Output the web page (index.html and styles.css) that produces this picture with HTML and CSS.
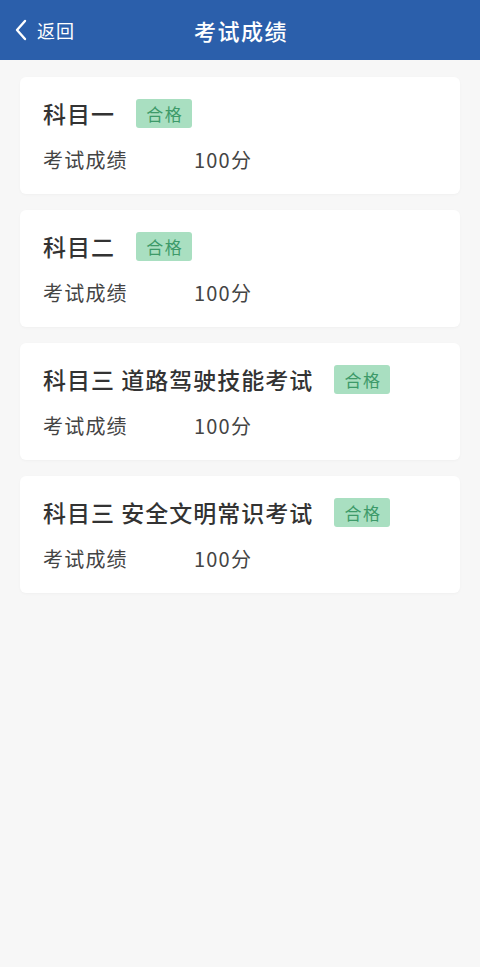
FILE: index.html
```html
<!DOCTYPE html>
<html lang="zh-CN">
<head>
    <meta charset="UTF-8">
    <meta name="viewport" content="width=device-width, initial-scale=1.0">
    <title>考试成绩</title>
    <link rel="stylesheet" href="styles.css">
</head>
<body>
    <header class="topbar">
        <a class="back" href="#">
            <svg class="back-icon" width="14" height="22" viewBox="0 0 14 22">
                <path d="M11 2 L3 11 L11 20" fill="none" stroke="#fff" stroke-width="2.4" stroke-linecap="round" stroke-linejoin="round"/>
            </svg>
            <span>返回</span>
        </a>
        <h1 class="title">考试成绩</h1>
    </header>

    <main class="list">
        <div class="card">
            <div class="card-head">
                <span class="subject">科目一</span>
                <span class="badge">合格</span>
            </div>
            <div class="score-row">
                <span class="label">考试成绩</span>
                <span class="value">100分</span>
            </div>
        </div>

        <div class="card">
            <div class="card-head">
                <span class="subject">科目二</span>
                <span class="badge">合格</span>
            </div>
            <div class="score-row">
                <span class="label">考试成绩</span>
                <span class="value">100分</span>
            </div>
        </div>

        <div class="card">
            <div class="card-head">
                <span class="subject">科目三 道路驾驶技能考试</span>
                <span class="badge">合格</span>
            </div>
            <div class="score-row">
                <span class="label">考试成绩</span>
                <span class="value">100分</span>
            </div>
        </div>

        <div class="card">
            <div class="card-head">
                <span class="subject">科目三 安全文明常识考试</span>
                <span class="badge">合格</span>
            </div>
            <div class="score-row">
                <span class="label">考试成绩</span>
                <span class="value">100分</span>
            </div>
        </div>
    </main>
</body>
</html>
```

FILE: styles.css
```css
body {
    margin: 0;
    padding: 0;
    background-color: #f7f7f7;
    font-family: "Noto Sans CJK SC", "Noto Sans", sans-serif;
    color: #333;
    min-height: 967px;
}

.topbar {
    position: relative;
    height: 60px;
    background-color: #2b5fab;
    display: flex;
    align-items: center;
    justify-content: center;
}

.back {
    position: absolute;
    left: 14px;
    top: 0;
    height: 60px;
    display: flex;
    align-items: center;
    gap: 9px;
    color: #fff;
    text-decoration: none;
    font-size: 18px;
    letter-spacing: 1px;
}

.title {
    margin: 0 0 0 2px;
    color: #fff;
    font-size: 22px;
    font-weight: 500;
    letter-spacing: 1.5px;
}

.list {
    padding: 17px 20px;
    display: flex;
    flex-direction: column;
    gap: 16px;
}

.card {
    background: #fff;
    border-radius: 6px;
    box-shadow: 0 1px 3px rgba(0, 0, 0, 0.03);
    height: 117px;
    box-sizing: border-box;
    padding: 21px 23px 0;
}

.card-head {
    display: flex;
    align-items: center;
    gap: 21px;
    height: 30px;
}

.subject {
    font-size: 23px;
    font-weight: 500;
    color: #333;
    letter-spacing: 1px;
}

.badge {
    display: inline-block;
    width: 56px;
    height: 29px;
    line-height: 29px;
    text-align: center;
    background-color: #a9dfc1;
    color: #3d9a69;
    font-size: 17px;
    letter-spacing: 1.5px;
    text-indent: 1.5px;
    border-radius: 3px;
}

.score-row {
    display: flex;
    align-items: center;
    margin-top: 17px;
    font-size: 20px;
    letter-spacing: 1.2px;
    color: #444;
}

.label {
    width: 151px;
}
```
